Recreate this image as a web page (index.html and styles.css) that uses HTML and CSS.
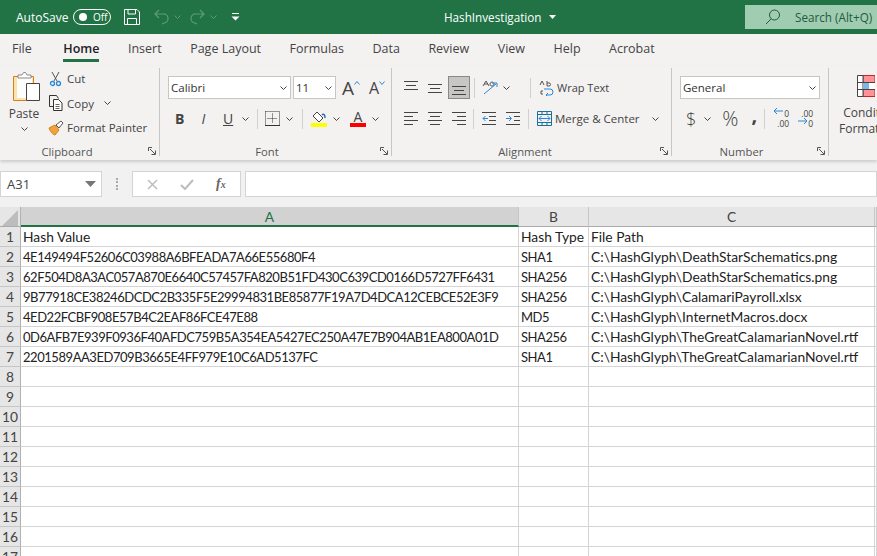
FILE: index.html
```html
<!DOCTYPE html>
<html>
<head lang="en">
    <meta charset="UTF-8">
    <title>HashInvestigation</title>
    <link rel="stylesheet" href="styles.css">
</head>
<body>
<div id="titlebar">
    <span class="autosave">AutoSave</span>
    <span class="toggle"><i></i>Off</span>
    <svg class="save" width="16" height="16" viewBox="0 0 16 16"><path d="M.5.5h12.5l2.500 2.500v12.500h-15zM4 .5v4.500h7.500v-4.500M3.500 15.500v-6h9v6"/></svg>
    <svg class="undo" width="15" height="16" viewBox="0 0 15 16"><path d="M5 1l-4 4 4 4M1 5h8a4.500 4.500 0 0 1 1 9l-2 1"/></svg>
    <svg class="chev dim" viewBox="0 0 7 4"><path d="M.5.5l3 3 3-3"/></svg>
    <svg class="redo" width="15" height="16" viewBox="0 0 15 16"><path d="M10 1l4 4-4 4M14 5h-8a4.500 4.500 0 0 0-1 9l2 1"/></svg>
    <svg class="chev dim" viewBox="0 0 7 4"><path d="M.5.5l3 3 3-3"/></svg>
    <svg class="qat" width="9" height="8" viewBox="0 0 9 8"><path d="M1 .5h7" stroke="#fff"/><path d="M.5 3.500h8l-4 4z" fill="#fff"/></svg>
    <span class="docname">HashInvestigation</span>
    <svg class="docarrow" width="7" height="4" viewBox="0 0 7 4"><path d="M0 0h7l-3.500 4z" fill="#fff"/></svg>
    <div class="search">
        <svg width="16" height="16" viewBox="0 0 16 16"><circle cx="9.500" cy="6" r="5"/><path d="M6 10l-5 5"/></svg>
        <span>Search (Alt+Q)</span>
    </div>
</div>

<ul id="tabs">
    <li>File</li>
    <li class="selected">Home</li>
    <li>Insert</li>
    <li>Page Layout</li>
    <li>Formulas</li>
    <li>Data</li>
    <li>Review</li>
    <li>View</li>
    <li>Help</li>
    <li>Acrobat</li>
</ul>

<div id="ribbon">
    <div class="group clipboard">
        <div class="body clip-body">
            <div class="paste">
                <svg width="28" height="31" viewBox="0 0 28 31">
                    <path d="M.5 4.500h20v24h-20z" fill="#fbe3ae" stroke="#d67f1b"/>
                    <path d="M4 6h15v20h-15z" fill="#fdfdfd"/>
                    <path d="M5 6v-3h4l1.500-2.500h2l1.500 2.500h4v3z" fill="#fff" stroke="#8a8a8a"/>
                    <path d="M13.500 11.500h13v17h-13z" fill="#fff" stroke="#444"/>
                </svg>
                <span>Paste</span>
                <svg class="chev" viewBox="0 0 7 4"><path d="M.5.5l3 3 3-3"/></svg>
            </div>
            <div class="clip-list">
                <div class="clip-row">
                    <svg width="16" height="16" viewBox="0 0 16 16"><path d="M4 1l5 9M11 1l-5 9" fill="none" stroke="#555"/><circle cx="4.500" cy="12.500" r="2" fill="none" stroke="#2b88d8" stroke-width="1.300"/><circle cx="10.500" cy="12.500" r="2" fill="none" stroke="#2b88d8" stroke-width="1.300"/></svg>
                    <span>Cut</span>
                </div>
                <div class="clip-row">
                    <svg width="16" height="16" viewBox="0 0 16 16"><path d="M5 11.500h-3.500v-11h7l2 3" fill="none" stroke="#333"/><path d="M5.500 4.500h5l3.500 3.500v7.500h-8.500z" fill="#fff" stroke="#333"/><path d="M7.500 9.500h4M7.500 11.500h4M7.500 13.500h4" stroke="#666"/></svg>
                    <span>Copy</span>
                    <svg class="chev copy-chev" viewBox="0 0 7 4"><path d="M.5.5l3 3 3-3"/></svg>
                </div>
                <div class="clip-row">
                    <svg width="16" height="16" viewBox="0 0 16 16"><path d="M1 8l6-3 4 5-4 5c-2 0-5-4-6-7z" fill="#f2a23a" stroke="#d67f1b"/><path d="M8 5l5-4 2 2-4 5z" fill="#fff" stroke="#555"/></svg>
                    <span>Format Painter</span>
                </div>
            </div>
        </div>
        <div class="label">Clipboard<svg class="launch" viewBox="0 0 8 8"><path d="M.5 4v-3.500h3.500M2 2l5 5M3.500 7.500h4v-4"/></svg></div>
    </div>

    <div class="group font">
        <div class="body">
            <div class="row">
                <div class="combo font-name"><span>Calibri</span><svg class="chev" viewBox="0 0 7 4"><path d="M.5.5l3 3 3-3"/></svg></div>
                <div class="combo font-size"><span>11</span><svg class="chev" viewBox="0 0 7 4"><path d="M.5.5l3 3 3-3"/></svg></div>
                <span class="grow">A<svg width="6" height="4" viewBox="0 0 6 4"><path d="M.5 3.500l2.500-3 2.500 3"/></svg></span>
                <span class="shrink">A<svg width="6" height="4" viewBox="0 0 6 4"><path d="M.5.500l2.500 3 2.500-3"/></svg></span>
            </div>
            <div class="row font-tools">
                <b class="bold">B</b>
                <i class="ital">I</i>
                <u class="under">U</u>
                <svg class="chev under-chev" viewBox="0 0 7 4"><path d="M.5.5l3 3 3-3"/></svg>
                <span class="sep sep-a"></span>
                <svg class="borders" width="15" height="15" viewBox="0 0 15 15"><path d="M.5.5h14v13M.5.5v13M7.500 2.500v10M2.500 7.500h10" stroke-dasharray="1 1"/><path d="M0 14.500h15"/></svg>
                <svg class="chev border-chev" viewBox="0 0 7 4"><path d="M.5.5l3 3 3-3"/></svg>
                <span class="sep sep-b"></span>
                <div class="swatch fill">
                    <svg width="16" height="12" viewBox="0 0 16 12"><path d="M6 1l6 6-4 4-6-6z" fill="#fff" stroke="#444"/><path d="M11 4c2-2 3 0 3 3" fill="none" stroke="#2b6cb0" stroke-width="1.500"/></svg>
                    <i class="yellow"></i>
                </div>
                <svg class="chev fill-chev" viewBox="0 0 7 4"><path d="M.5.5l3 3 3-3"/></svg>
                <div class="swatch color">
                    <span>A</span>
                    <i class="red"></i>
                </div>
                <svg class="chev color-chev" viewBox="0 0 7 4"><path d="M.5.5l3 3 3-3"/></svg>
            </div>
        </div>
        <div class="label">Font<svg class="launch" viewBox="0 0 8 8"><path d="M.5 4v-3.500h3.500M2 2l5 5M3.500 7.500h4v-4"/></svg></div>
    </div>

    <div class="group alignment">
        <div class="body">
            <div class="row align-top">
                <svg class="lines" viewBox="0 0 14 14"><path d="M0 .5h14M2 4.500h10M0 8.500h14"/></svg>
                <svg class="lines" viewBox="0 0 14 14"><path d="M0 3.500h14M2 7.500h10M0 11.500h14"/></svg>
                <span class="pressed"><svg class="lines" viewBox="0 0 14 14"><path d="M0 5.500h14M2 9.500h10M0 13.500h14"/></svg></span>
                <span class="sep sep-c"></span>
                <svg class="orient" width="16" height="16" viewBox="0 0 16 16"><path d="M1 7l3-5 3 5M2 5h4" stroke="#555" fill="none"/><path d="M8 5a2 2 0 1 1 0 .1" stroke="#555" fill="none"/><path d="M2 15l12-10M10 4h5v4" stroke="#2b88d8" fill="none"/></svg>
                <svg class="chev" viewBox="0 0 7 4"><path d="M.5.5l3 3 3-3"/></svg>
                <span class="sep sep-d"></span>
                <div class="wide-btn wrap">
                    <svg width="15" height="16" viewBox="0 0 15 16"><path d="M5 9h6a3 3 0 0 1 0 6h-4M9 13l-2 2 2 2" fill="none" stroke="#2b88d8"/><path d="M1 5l2-4 2 4M8 1v5h2a1.500 1.500 0 0 0 0-3h-2M4 11h-2v3h2" fill="none" stroke="#555"/></svg>
                    <span>Wrap Text</span>
                </div>
            </div>
            <div class="row align-low">
                <svg class="lines" viewBox="0 0 14 14"><path d="M0 .5h14M0 4.500h9M0 8.500h14M0 12.500h9"/></svg>
                <svg class="lines" viewBox="0 0 14 14"><path d="M0 .5h14M2 4.500h10M0 8.500h14M2 12.500h10"/></svg>
                <svg class="lines" viewBox="0 0 14 14"><path d="M0 .5h14M5 4.500h9M0 8.500h14M5 12.500h9"/></svg>
                <span class="sep sep-e"></span>
                <svg class="lines blue" viewBox="0 0 14 14"><path d="M0 .5h14M7 4.500h7M7 8.500h7M0 12.500h14"/><path class="arrow" d="M6 6.500h-5M3.500 4l-2.500 2.500 2.500 2.500"/></svg>
                <svg class="lines blue" viewBox="0 0 14 14"><path d="M0 .5h14M8 4.500h6M8 8.500h6M0 12.500h14"/><path class="arrow" d="M0 6.500h5M3 4l2.500 2.500-2.500 2.500"/></svg>
                <span class="sep sep-f"></span>
                <div class="wide-btn merge">
                    <svg width="15" height="15" viewBox="0 0 15 15"><path d="M.5.5h14v14h-14zM.5 3.500h14M.5 11.500h14M5 .5v3M10 .5v3M5 11.500v3M10 11.500v3" fill="none" stroke="#1c6e9c"/><path d="M2 7.500h11M4.500 5l-2.500 2.500 2.500 2.500M10.500 5l2.500 2.500-2.500 2.500" fill="none" stroke="#2b88d8"/></svg>
                    <span>Merge &amp; Center</span>
                    <svg class="chev merge-chev" viewBox="0 0 7 4"><path d="M.5.5l3 3 3-3"/></svg>
                </div>
            </div>
        </div>
        <div class="label">Alignment<svg class="launch" viewBox="0 0 8 8"><path d="M.5 4v-3.500h3.500M2 2l5 5M3.500 7.500h4v-4"/></svg></div>
    </div>

    <div class="group number">
        <div class="body">
            <div class="row">
                <div class="combo num-format"><span>General</span><svg class="chev" viewBox="0 0 7 4"><path d="M.5.5l3 3 3-3"/></svg></div>
            </div>
            <div class="row num-tools">
                <span class="dollar">$</span>
                <svg class="chev dollar-chev" viewBox="0 0 7 4"><path d="M.5.5l3 3 3-3"/></svg>
                <span class="percent">%</span>
                <b class="comma">,</b>
                <span class="sep sep-g"></span>
                <div class="decimals inc">
                    <svg width="11" height="12" viewBox="0 0 11 12"><path d="M10 3h-9M4 0l-3 3 3 3" fill="none" stroke="#2b88d8"/></svg>
                    <span>0<br>.00</span>
                </div>
                <div class="decimals dec">
                    <span>.00<br>0</span>
                    <svg width="11" height="12" viewBox="0 0 11 12"><path d="M1 9h9M7 6l3 3-3 3" fill="none" stroke="#2b88d8"/></svg>
                </div>
            </div>
        </div>
        <div class="label">Number<svg class="launch" viewBox="0 0 8 8"><path d="M.5 4v-3.500h3.500M2 2l5 5M3.500 7.500h4v-4"/></svg></div>
    </div>

    <div class="styles">
        <svg class="cf-icon" width="18" height="22" viewBox="0 0 18 22"><path d="M6 .5h12v21h-12z" fill="#ff9397" stroke="#c62828"/><path d="M.5.5h5.500v21h-5.500z" fill="#fff" stroke="#444"/><path d="M6 7.500h6v7h-6z" fill="#7cb7e8"/><path d="M12 7.500h6v7h-6z" fill="#fff"/><path d="M0 7.500h18M0 14.500h18" stroke="#444"/></svg>
        <span>Conditional<br>Formatting<svg class="chev" viewBox="0 0 7 4"><path d="M.5.5l3 3 3-3"/></svg></span>
    </div>
</div>

<div id="formulabar">
    <div class="namebox"><span>A31</span><svg width="11" height="6" viewBox="0 0 11 6"><path d="M0 0h11l-5.500 6z" fill="#777"/></svg></div>
    <span class="grip"></span>
    <div class="fx-buttons">
        <svg width="11" height="11" viewBox="0 0 11 11"><path d="M1 1l9 9M10 1l-9 9" stroke="#bdbdbd" stroke-width="1.500"/></svg>
        <svg width="14" height="11" viewBox="0 0 14 11"><path d="M1 6l4 4 8-9" fill="none" stroke="#bdbdbd" stroke-width="2"/></svg>
        <em>f<small>x</small></em>
    </div>
    <div class="fx-input"></div>
</div>

<table id="sheet">
    <colgroup><col class="c-head"><col class="c-a"><col class="c-b"><col class="c-c"><col></colgroup>
    <tr class="columns">
        <th class="corner"><svg width="16" height="16" viewBox="0 0 16 16"><path d="M16 0v16h-16z" fill="#bdbdbd"/></svg></th>
        <th class="active">A</th><th>B</th><th>C</th><th class="rest"></th>
    </tr>
    <tr><th>1</th><td>Hash Value</td><td>Hash Type</td><td>File Path</td><td></td></tr>
    <tr><th>2</th><td class="hex">4E149494F52606C03988A6BFEADA7A66E55680F4</td><td class="hex">SHA1</td><td>C:\HashGlyph\DeathStarSchematics.png</td><td></td></tr>
    <tr><th>3</th><td class="hex">62F504D8A3AC057A870E6640C57457FA820B51FD430C639CD0166D5727FF6431</td><td class="hex">SHA256</td><td>C:\HashGlyph\DeathStarSchematics.png</td><td></td></tr>
    <tr><th>4</th><td class="hex">9B77918CE38246DCDC2B335F5E29994831BE85877F19A7D4DCA12CEBCE52E3F9</td><td class="hex">SHA256</td><td>C:\HashGlyph\CalamariPayroll.xlsx</td><td></td></tr>
    <tr><th>5</th><td class="hex">4ED22FCBF908E57B4C2EAF86FCE47E88</td><td class="hex">MD5</td><td>C:\HashGlyph\InternetMacros.docx</td><td></td></tr>
    <tr><th>6</th><td class="hex">0D6AFB7E939F0936F40AFDC759B5A354EA5427EC250A47E7B904AB1EA800A01D</td><td class="hex">SHA256</td><td>C:\HashGlyph\TheGreatCalamarianNovel.rtf</td><td></td></tr>
    <tr><th>7</th><td class="hex">2201589AA3ED709B3665E4FF979E10C6AD5137FC</td><td class="hex">SHA1</td><td>C:\HashGlyph\TheGreatCalamarianNovel.rtf</td><td></td></tr>
    <tr><th>8</th><td></td><td></td><td></td><td></td></tr>
    <tr><th>9</th><td></td><td></td><td></td><td></td></tr>
    <tr><th>10</th><td></td><td></td><td></td><td></td></tr>
    <tr><th>11</th><td></td><td></td><td></td><td></td></tr>
    <tr><th>12</th><td></td><td></td><td></td><td></td></tr>
    <tr><th>13</th><td></td><td></td><td></td><td></td></tr>
    <tr><th>14</th><td></td><td></td><td></td><td></td></tr>
    <tr><th>15</th><td></td><td></td><td></td><td></td></tr>
    <tr><th>16</th><td></td><td></td><td></td><td></td></tr>
    <tr><th>17</th><td></td><td></td><td></td><td></td></tr>
</table>
</body>
</html>
```

FILE: styles.css
```css
*{
    margin: 0;
    padding: 0;
    box-sizing: border-box;
}
ul{
    list-style: none;
}
html,body{
    height: 100%;
    overflow: hidden;
}
body{
    font-family: "Open Sans", "Noto Sans", sans-serif;
    font-size: 12px;
    color: #444;
    background: #f1f1f1;
}
svg{
    display: block;
    flex: none;
}
.chev{
    width: 7px;
    height: 4px;
    fill: none;
    stroke: #444;
}

/* title bar */
#titlebar{
    height: 34px;
    background: #217346;
    color: #fff;
    display: flex;
    align-items: center;
    padding-left: 16px;
}
.autosave{
    width: 57px;
    font-size: 12px;
}
.toggle{
    width: 38px;
    height: 16px;
    border: 1px solid #fff;
    border-radius: 8px;
    display: flex;
    align-items: center;
    font-size: 10px;
    padding-left: 5px;
    gap: 6px;
}
.toggle i{
    width: 8px;
    height: 8px;
    border-radius: 50%;
    background: #fff;
}
.save{
    margin-left: 13px;
    fill: none;
    stroke: #fff;
}
.undo,.redo{
    fill: none;
    stroke: #5f9a7b;
    stroke-width: 1.2;
}
.undo{
    margin-left: 14px;
}
.redo{
    margin-left: 9px;
}
.chev.dim{
    stroke: #5f9a7b;
    margin-left: 5px;
}
.qat{
    margin-left: 14px;
}
.docname{
    margin-left: 204px;
    font-size: 11.700px;
}
.docarrow{
    margin-left: 7px;
}
.search{
    margin-left: auto;
    width: 132px;
    height: 24px;
    background: #a0ccb2;
    color: #1e5c3b;
    display: flex;
    align-items: center;
    padding-left: 20px;
    gap: 14px;
    font-size: 11.700px;
    white-space: nowrap;
}
.search svg{
    fill: none;
    stroke: #1e5c3b;
}

/* tabs */
#tabs{
    height: 32px;
    background: #f3f2f1;
    display: flex;
    padding-left: 12px;
    gap: 28.500px;
    font-size: 12.500px;
}
#tabs li{
    line-height: 30px;
    height: 28px;
    color: #444;
}
#tabs li.selected{
    margin-left: 3px;
    color: #222;
    font-weight: 600;
    border-bottom: 3px solid #217346;
    height: 28px;
}

/* ribbon */
#ribbon{
    height: 94px;
    background: #f3f2f1;
    display: flex;
    padding-top: 2px;
    box-shadow: 0 2px 3px #ccc;
    position: relative;
    overflow: hidden;
}
.group{
    height: 88px;
    border-right: 1px solid #c8c6c4;
    display: flex;
    flex-direction: column;
    padding-top: 8px;
    flex: none;
}
.body{
    flex: 1;
}
.label{
    height: 14px;
    line-height: 14px;
    margin-bottom: -3px;
    padding-right: 25px;
    font-size: 11.300px;
    text-align: center;
    position: relative;
    color: #555;
}
.launch{
    position: absolute;
    right: 3px;
    top: 2px;
    width: 8px;
    height: 8px;
    fill: none;
    stroke: #555;
}
.row{
    display: flex;
    align-items: center;
    height: 23px;
}
.row + .row{
    margin-top: 8px;
}
.sep{
    width: 1px;
    height: 20px;
    background: #d2d0ce;
    flex: none;
}

/* clipboard */
.clipboard{
    width: 160px;
}
.clip-body{
    display: flex;
}
.paste{
    width: 48px;
    display: flex;
    flex-direction: column;
    align-items: center;
    font-size: 12px;
    margin-top: -4px;
}
.paste svg:first-child{
    margin-left: 5px;
}
.paste span{
    margin-top: 2px;
}
.paste .chev{
    margin-top: 5px;
}
.clip-list{
    display: flex;
    flex-direction: column;
    gap: 7.500px;
    margin-top: -6px;
}
.clip-row{
    display: flex;
    align-items: center;
    gap: 3px;
    height: 17px;
    white-space: nowrap;
    font-size: 11.500px;
}
.copy-chev{
    margin-left: 7px;
}

/* font */
.font{
    width: 232px;
    padding-left: 8px;
}
.combo{
    height: 23px;
    background: #fff;
    border: 1px solid #c8c6c4;
    display: flex;
    align-items: center;
    justify-content: space-between;
    padding: 0 3px 0 2px;
    font-size: 11.500px;
    color: #333;
}
.font-name{
    width: 123px;
}
.font-size{
    width: 43px;
    margin-left: 2px;
}
.grow,.shrink{
    display: flex;
    line-height: 20px;
    color: #444;
}
.grow{
    margin-left: 6px;
    font-size: 19px;
}
.shrink{
    margin-left: 9px;
    font-size: 16px;
}
.grow svg,.shrink svg{
    fill: none;
    stroke: #2b88d8;
    margin-top: 3px;
}
.font-tools{
    padding-left: 7px;
    font-size: 14px;
}
.bold,.ital,.under{
    width: 9px;
    text-align: center;
    flex: none;
}
.ital{
    margin-left: 15px;
}
.under{
    margin-left: 15px;
}
.under-chev{
    margin-left: 10px;
}
.sep-a{
    margin-left: 8px;
}
.borders{
    margin-left: 7px;
    fill: none;
    stroke: #333;
}
.border-chev{
    margin-left: 6px;
}
.sep-b{
    margin-left: 9px;
}
.swatch{
    width: 16px;
    flex: none;
    display: flex;
    flex-direction: column;
    align-items: center;
}
.swatch i{
    display: block;
    width: 16px;
    height: 4px;
}
.swatch span{
    font-size: 14px;
    line-height: 13px;
}
.yellow{
    background: #ffff00;
}
.red{
    background: #ff0000;
}
.fill{
    margin-left: 8px;
}
.fill-chev{
    margin-left: 6px;
}
.color{
    margin-left: 10px;
}
.color-chev{
    margin-left: 6px;
}

/* alignment */
.alignment{
    width: 280px;
    padding-left: 12px;
}
.lines{
    width: 14px;
    height: 14px;
    fill: none;
    stroke: #444;
}
.lines .arrow{
    stroke: #2b88d8;
}
.align-top .lines + .lines{
    margin-left: 10px;
}
.pressed{
    width: 22px;
    height: 23px;
    margin-left: 6px;
    background: #c8c6c4;
    border: 1px solid #8a8886;
    display: flex;
    align-items: center;
    justify-content: center;
}
.sep-c{
    margin-left: 4px;
}
.orient{
    margin-left: 7px;
    margin-top: -2px;
}
.orient + .chev{
    margin-left: 5px;
}
.sep-d{
    margin-left: 20px;
}
.wide-btn{
    display: flex;
    align-items: center;
    gap: 3px;
    font-size: 11.500px;
    white-space: nowrap;
    margin-left: 8px;
}
.wrap{
    font-size: 11px;
}
.align-low .lines + .lines{
    margin-left: 10px;
}
.sep-e{
    margin-left: 7px;
}
.lines.blue{
    margin-left: 8px;
}
.sep-f{
    margin-left: 8px;
}
.merge-chev{
    margin-left: 9px;
}

/* number */
.number{
    width: 157px;
    padding-left: 8px;
}
.num-format{
    width: 140px;
}
.num-tools{
    padding-left: 6px;
}
.dollar{
    font-size: 18px;
    font-weight: 300;
}
.dollar-chev{
    margin-left: 8px;
}
.percent{
    font-size: 20px;
    font-weight: 300;
    margin-left: 11px;
}
.comma{
    font-size: 20px;
    line-height: 14px;
    margin-left: 13px;
    height: 22px;
}
.sep-g{
    margin-left: 7px;
}
.decimals{
    position: relative;
    width: 16px;
    height: 20px;
    margin-left: 8px;
    font-size: 8.500px;
    line-height: 10px;
    text-align: right;
}
.decimals svg{
    position: absolute;
    left: 0;
}
.inc svg{
    top: -1px;
}
.dec svg{
    top: 3px;
}

/* styles, cut off by the window */
.styles{
    padding: 7px 0 0 10px;
    white-space: nowrap;
    line-height: 16px;
    font-size: 12px;
}
.cf-icon{
    margin: 0 0 8px 18px;
}
.styles span{
    display: block;
    text-align: center;
}
.styles .chev{
    display: inline-block;
    margin: 0 0 2px 4px;
}

/* formula bar */
#formulabar{
    height: 26px;
    margin-top: 11px;
    display: flex;
}
.namebox,.fx-buttons,.fx-input{
    background: #fff;
    border: 1px solid #d4d4d4;
    display: flex;
    align-items: center;
}
.namebox{
    width: 102px;
    justify-content: space-between;
    padding: 0 5px 0 6px;
    font-size: 13px;
}
.grip{
    width: 2px;
    height: 12px;
    margin: 7px 14px 0 14px;
    border-left: 2px dotted #aaa;
}
.fx-buttons{
    width: 109px;
    padding-left: 14px;
    gap: 22px;
}
.fx-buttons em{
    font-family: "Liberation Serif", serif;
    font-size: 14px;
    font-weight: bold;
    color: #666;
}
.fx-buttons small{
    font-size: 10px;
}
.fx-input{
    flex: 1;
    margin-left: 4px;
}

/* sheet */
#sheet{
    width: 877px;
    margin-top: 10px;
    table-layout: fixed;
    border-collapse: separate;
    border-spacing: 0;
    background: #fff;
    font-family: Lato, "Liberation Sans", sans-serif;
    font-size: 13.800px;
    color: #222;
}
.c-head{
    width: 21px;
}
.c-a{
    width: 498px;
}
.c-b{
    width: 70px;
}
.c-c{
    width: 286px;
}
#sheet th{
    background: #e6e6e6;
    border-right: 1px solid #b1b1b1;
    border-bottom: 1px solid #c6c6c6;
    font-weight: normal;
    height: 20px;
    color: #444;
    padding: 0;
}
#sheet td{
    height: 20px;
    padding: 0 0 0 2px;
    border-right: 1px solid #d4d4d4;
    border-bottom: 1px solid #d4d4d4;
    white-space: nowrap;
    overflow: hidden;
}
/* Lato digits and capitals run wider than the sheet font */
#sheet td.hex{
    font-size: 13px;
    letter-spacing: -0.450px;
}
#sheet .columns th{
    border-bottom: 1px solid #ababab;
    border-right: 1px solid #c6c6c6;
}
#sheet th.active{
    background: #d2d2d2;
    color: #217346;
    border-bottom: 2px solid #217346;
}
#sheet th.corner{
    border-right: 1px solid #b1b1b1;
}
.corner svg{
    margin: 2px 0 0 2px;
}
#sheet th.rest{
    background: #e6e6e6;
}
```
